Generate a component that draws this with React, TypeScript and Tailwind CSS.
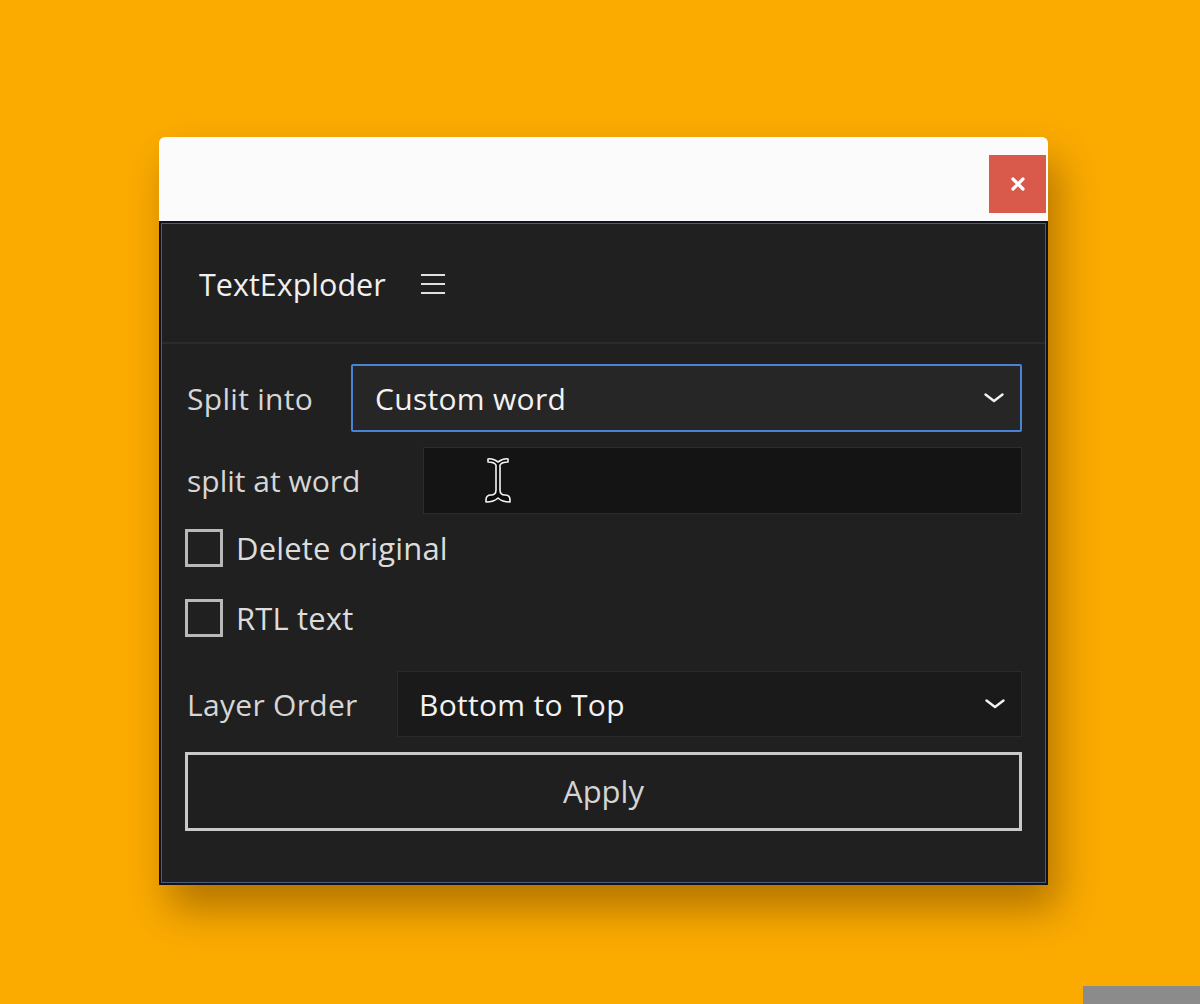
import React, { useState } from 'react';

const font = { fontFamily: '"Open Sans", "Noto Sans", sans-serif' };

const Chevron: React.FC = () => (
  <svg width="20" height="10" viewBox="0 0 20 10" fill="none">
    <path d="M1.5 1.5 L10 8 L18.5 1.5" stroke="#f2f2f2" strokeWidth="2.4" strokeLinecap="round" strokeLinejoin="round" />
  </svg>
);

const IBeam: React.FC = () => (
  <svg width="26" height="47" viewBox="0 0 26 47" fill="none">
    <path
      d="M3 2 C7 1 10 3 13 5 C16 3 19 1 23 2 L23 5 C19 5 16 6 15 8 L15 33 C15 36 17 38 20 38 C23 38 25 40 25 43 L25 45 C20 45 16 44 13 41 C10 44 6 45 1 45 L1 43 C1 40 3 38 6 38 C9 38 11 36 11 33 L11 8 C10 6 7 5 3 5 Z"
      fill="#0b0b0b"
      stroke="#f4f4f4"
      strokeWidth="1.6"
      strokeLinejoin="round"
    />
  </svg>
);

const Checkbox: React.FC<{ label: string; checked: boolean; onToggle: () => void }> = ({ label, checked, onToggle }) => (
  <button type="button" onClick={onToggle} className="flex items-center h-[38px]">
    <span className="w-[38px] h-[38px] border-[3px] border-[#b9b9b9] flex items-center justify-center">
      {checked && <span className="w-[18px] h-[18px] bg-[#b9b9b9]" />}
    </span>
    <span className="ml-[13px] text-[31px] text-[#dcdcdc] leading-none tracking-[0.005em]">{label}</span>
  </button>
);

export default function App() {
  const [deleteOriginal, setDeleteOriginal] = useState(false);
  const [rtl, setRtl] = useState(false);

  return (
    <div className="relative w-full h-[1004px] overflow-hidden bg-[#fbab00] pt-[137px] pl-[159px]" style={font}>
      <div className="w-[889px] rounded-t-[6px] shadow-[10px_24px_40px_rgba(90,50,0,0.45)]">
        {/* title bar */}
        <div className="h-[84px] bg-[#fbfbfb] rounded-t-[6px] flex justify-end pt-[18px] pr-[2px]">
          <button className="w-[57px] h-[58px] bg-[#d9594a] flex items-center justify-center">
            <svg width="16" height="14" viewBox="0 0 16 14">
              <path d="M3 2 L13 12 M13 2 L3 12" stroke="#ffffff" strokeWidth="3.2" strokeLinecap="round" />
            </svg>
          </button>
        </div>

        {/* panel */}
        <div className="h-[664px] border-2 border-[#10131d] bg-[#202020]">
          <div className="h-full border border-[#4c5b7a] flex flex-col">
            <div className="h-[120px] flex items-center pl-[37px] pt-[2px] border-b-2 border-[#2b2b2b] shrink-0">
              <span className="text-[30.5px] text-[#efefef] leading-none">TextExploder</span>
              <div className="ml-[35px] flex flex-col gap-[7px]">
                <span className="block w-[24px] h-[2px] bg-[#e0e0e0]" />
                <span className="block w-[24px] h-[2px] bg-[#e0e0e0]" />
                <span className="block w-[24px] h-[2px] bg-[#e0e0e0]" />
              </div>
            </div>

            <div className="pl-[23px] pr-[23px] flex flex-col">
              {/* split into */}
              <div className="mt-[20px] flex items-center h-[68px]">
                <span className="w-[166px] pl-[2px] text-[30px] text-[#d6d6d6] tracking-[0.01em]">Split into</span>
                <div className="flex-1 h-full bg-[#262626] border-2 border-[#4a82d6] rounded-[2px] flex items-center justify-between pl-[22px] pr-[16px]">
                  <span className="text-[30px] text-[#f2f2f2] tracking-[0.01em]">Custom word</span>
                  <Chevron />
                </div>
              </div>

              {/* split at word */}
              <div className="mt-[15px] flex items-center h-[67px]">
                <span className="w-[238px] pl-[2px] text-[30px] text-[#d6d6d6]">split at word</span>
                <div className="flex-1 h-full bg-[#141414] border border-[#2c2c2c] flex items-center pl-[61px]">
                  <IBeam />
                </div>
              </div>

              <div className="mt-[15px]">
                <Checkbox label="Delete original" checked={deleteOriginal} onToggle={() => setDeleteOriginal(!deleteOriginal)} />
              </div>
              <div className="mt-[32px]">
                <Checkbox label="RTL text" checked={rtl} onToggle={() => setRtl(!rtl)} />
              </div>

              {/* layer order */}
              <div className="mt-[34px] flex items-center h-[66px]">
                <span className="w-[212px] pl-[2px] text-[30px] text-[#d6d6d6] tracking-[0.01em]">Layer Order</span>
                <div className="flex-1 h-full bg-[#1a1a1a] border border-[#2a2a2a] flex items-center justify-between pl-[21px] pr-[16px]">
                  <span className="text-[30px] text-[#f2f2f2] tracking-[0.01em]">Bottom to Top</span>
                  <Chevron />
                </div>
              </div>

              <button className="mt-[15px] h-[79px] w-full border-[3px] border-[#c9c9c9] bg-[#1f1f1f] text-[31px] text-[#d4d4d4]">
                Apply
              </button>
            </div>
          </div>
        </div>
      </div>

      <div className="absolute bottom-0 right-0 w-[117px] h-[18px] bg-[#8b8b8b]" />
    </div>
  );
}
